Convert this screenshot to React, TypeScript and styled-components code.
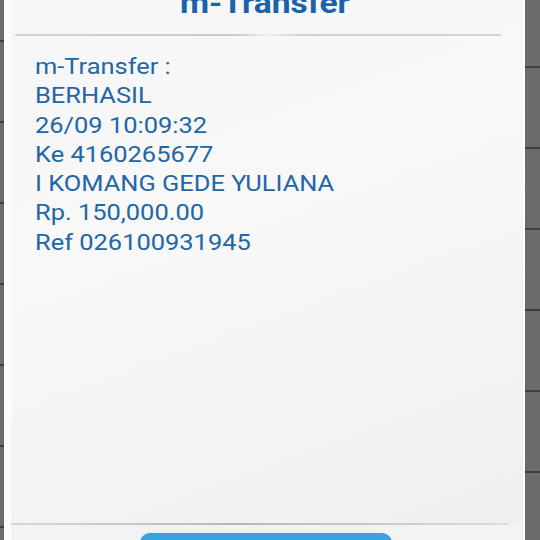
import React from "react";
import styled, { createGlobalStyle } from "styled-components";

const Global = createGlobalStyle`
  html, body { margin: 0; padding: 0; width: 540px; height: 540px; overflow: hidden; background: #686868; }
  #root { width: 540px; height: 540px; }
`;

const Screen = styled.div`
  display: flex;
  width: 540px;
  height: 540px;
  overflow: hidden;
  font-family: Roboto, "Noto Sans", Arial, sans-serif;
`;

const Strip = styled.div<{ $w: number; $offset: number }>`
  flex: 0 0 ${(p) => p.$w}px;
  background-color: #6b6b6b;
  background-image: repeating-linear-gradient(
    to bottom,
    transparent 0px,
    transparent ${(p) => p.$offset}px,
    #3e3e3e ${(p) => p.$offset}px,
    #3e3e3e ${(p) => p.$offset + 2}px,
    transparent ${(p) => p.$offset + 2}px,
    transparent 81px
  );
`;

const Dialog = styled.div`
  flex: 1;
  display: flex;
  flex-direction: column;
  border-left: 7px solid #fbfbfb;
  border-right: 2px solid #fdfdfd;
  box-shadow: 1px 0 0 #9a9a9a;
  background: linear-gradient(160deg, #f6f6f6 0%, #f8f8f8 40%, #efefef 100%);
  overflow: hidden;
`;

const Header = styled.div`
  height: 60px;
  margin-top: -26px;
  display: flex;
  align-items: flex-end;
  justify-content: center;
  padding-right: 4px;
`;

const Title = styled.h1`
  margin: 0 0 11px;
  font-size: 30px;
  line-height: 40px;
  font-weight: 700;
  color: #1a63ab;
  transform: scaleX(1.12);
`;

const Divider = styled.div<{ $inset: number }>`
  height: 2px;
  margin: 0 ${(p) => p.$inset}px 0 4px;
  background: linear-gradient(
    to right,
    #d2d2d2 0%,
    #c8c8c8 45%,
    #eeeeee 52%,
    #cfcfcf 60%,
    #d6d6d6 100%
  );
`;

const Body = styled.div`
  flex: 1;
  padding: 16px 0 0 24px;
  display: flex;
  flex-direction: column;
  align-items: flex-start;
`;

const Line = styled.div`
  font-size: 22.5px;
  line-height: 29.3px;
  color: #2366a6;
  white-space: nowrap;
  transform: scaleX(1.13);
  transform-origin: 0 50%;
`;

const BottomDivider = styled.div`
  height: 2px;
  margin: 0 14px 0 0;
  background: linear-gradient(to right, #d8d8d8, #b9b5c0 45%, #c9c6cc 70%, #dcdcdc);
`;

const Footer = styled.div`
  height: 15px;
  flex: 0 0 15px;
  background: #f3f3f3;
  display: flex;
  justify-content: center;
  padding: 8px 2px 0 0;
  box-sizing: border-box;
`;

const Button = styled.div`
  width: 252px;
  height: 30px;
  flex: 0 0 auto;
  border-radius: 10px;
  background: #3aa1df;
  box-shadow: 0 0 2px #bfe3f5;
`;

const lines = [
  "m-Transfer :",
  "BERHASIL",
  "26/09 10:09:32",
  "Ke 4160265677",
  "I KOMANG GEDE YULIANA",
  "Rp. 150,000.00",
  "Ref 026100931945",
];

export default function App() {
  return (
    <>
      <Global />
      <Screen>
        <Strip $w={4} $offset={40} />
        <Dialog>
          <Header>
            <Title>m-Transfer</Title>
          </Header>
          <Divider $inset={22} />
          <Body>
            {lines.map((l) => (
              <Line key={l}>{l}</Line>
            ))}
          </Body>
          <BottomDivider />
          <Footer>
            <Button />
          </Footer>
        </Dialog>
        <Strip $w={15} $offset={66} />
      </Screen>
    </>
  );
}
